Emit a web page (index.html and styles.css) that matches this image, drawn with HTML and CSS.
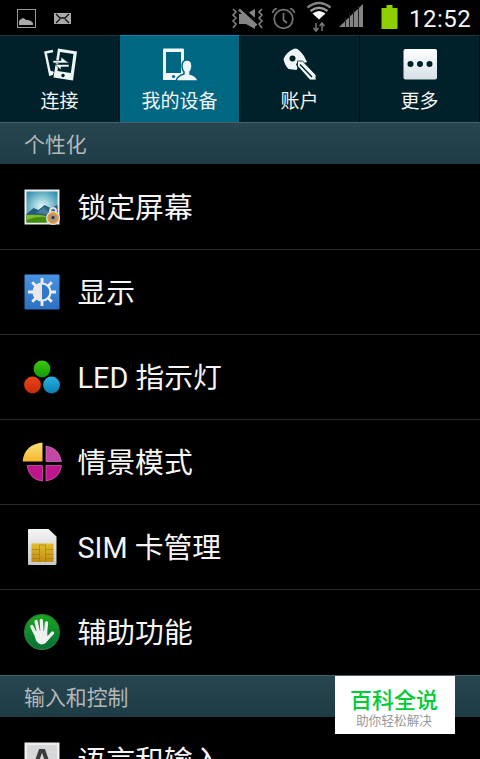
FILE: index.html
```
<!DOCTYPE html>
<html lang="zh-CN">

<head>
  <meta charset="utf-8">
  <title>设置</title>
  <link rel="stylesheet" href="styles.css">
</head>

<body>
  <div class="phone">
    <div class="status-bar">
      <svg class="status-left" width="72" height="20" viewBox="0 0 72 20">
        <rect x="1.500" y="1.500" width="18" height="18" fill="none" stroke="#999" stroke-width="1" />
        <path d="M3 17v-4l2-2 2-1 2 1 1 1 2 0 3 1 2 2v2z" fill="#aaa" />
        <rect x="38" y="5" width="17" height="11" fill="#aaa" />
        <path d="M40 6l4 4h5l4-4M40 15l4-4M53 15l-4-4" fill="none" stroke="#111" stroke-width="1.300" />
      </svg>
      <svg class="status-right" width="170" height="35" viewBox="230 0 170 35">
        <!-- 静音 -->
        <path d="M233 9l3 3-3 3 3 3-3 3 3 3-3 4M262 9l-3 3 3 3-3 3 3 3-3 3 3 4" fill="none" stroke="#808080" stroke-width="1.600" />
        <path d="M239 14h7l9-5v20l-9-5h-7z" fill="#858585" />
        <path d="M240 8l17 15" stroke="#000" stroke-width="5" />
        <path d="M239 9.500l17.500 16" stroke="#858585" stroke-width="2.500" />
        <!-- 闹钟 -->
        <circle cx="283.500" cy="19" r="9.300" fill="none" stroke="#777" stroke-width="1.700" />
        <path d="M283.500 13v7l3.500 3M272.500 13q1-4 4.500-4.500M294.500 13q-1-4-4.500-4.500" fill="none" stroke="#777" stroke-width="1.700" />
        <!-- wifi -->
        <path d="M307.500 7.500q11.500-9 23 0" fill="none" stroke="#858585" stroke-width="2.600" />
        <path d="M310.500 11q8.500-6.500 17 0" fill="none" stroke="#999" stroke-width="2.400" />
        <path d="M312.500 13.500q6.500-5 13 0l-6.500 6z" fill="#fff" />
        <path d="M316 23v7M313.500 28l2.500 3 2.500-3M322 31v-7M319.500 26l2.500-3 2.500 3" fill="none" stroke="#777" stroke-width="1.500" />
        <!-- 信号 -->
        <path d="M339 27l24-23v23z" fill="#858585" />
        <path d="M345.500 18v9M349.500 14v13M353.500 10v17M358.500 6v21" stroke="#222" stroke-width="1" />
        <!-- 电池 -->
        <path d="M381.500 8h5v-3h6v3h5v21h-16z" fill="#8fce00" />
      </svg>
      <span class="clock">12:52</span>
    </div>

    <div class="tabs">
      <div class="tab">
        <svg width="40" height="38" viewBox="40 46 40 38">
          <path d="M53 51l-7.500 1.500 4.500 21.500 3.500-2" fill="none" stroke="#eef5f7" stroke-width="2.400" />
          <path d="M49 70l4 2v3l-4 1z" fill="#eef5f7" />
          <path d="M58 48.500l19 3-4 29-19.500-3z" fill="#eef5f7" />
          <path d="M60 52l13.500 2-2.700 19-13.300-2z" fill="#00212a" />
          <path d="M53 60.500h8v-3.500l8 6H53zM69 64.500H55l6 5.500v-3h8z" fill="#eef5f7" stroke="#00212a" stroke-width=".6" />
          <circle cx="63" cy="75.500" r="1.700" fill="#00212a" />
        </svg>
        <span>连接</span>
      </div>
      <div class="tab active">
        <svg width="40" height="38" viewBox="160 46 40 38">
          <path d="M164 48.500h19q1 0 1 1v30.500h-21v-30.500q0-1 1-1z" fill="#f1f7f9" />
          <path d="M166 52h15v21h-15z" fill="#006783" />
          <circle cx="173.500" cy="76.500" r="1.600" fill="#006783" />
          <path d="M187 60q-5 0-5 6 0 4 2 6v2q-7 2-8 7h22q-1-5-8-7v-2q2-2 2-6 0-6-5-6z" fill="#f1f7f9" stroke="#006783" stroke-width="1.500" />
        </svg>
        <span>我的设备</span>
      </div>
      <div class="tab">
        <svg width="40" height="38" viewBox="280 46 40 38">
          <path d="M283.500 59q3-7 10-10 2-1 4 0 4 3 6.500 7l3 6-3 1-5-2-3 3 1.500 4-1 2-8-1q-4-4-5-10z" fill="#eef5f7" />
          <circle cx="292.500" cy="58.500" r="3" fill="#00212a" />
          <path d="M297.500 61h5l13.500 14v5h-6l-12.500-14z" fill="#eef5f7" stroke="#00212a" stroke-width=".8" />
          <path d="M300 64.500l12 12.500" stroke="#00212a" stroke-width="1.300" />
        </svg>
        <span>账户</span>
      </div>
      <div class="tab">
        <svg width="40" height="38" viewBox="400 46 40 38">
          <defs>
            <linearGradient id="more" x1="0" y1="0" x2="0" y2="1">
              <stop offset="0" stop-color="#fff" />
              <stop offset="1" stop-color="#d5e0e5" />
            </linearGradient>
          </defs>
          <rect x="403.500" y="49" width="33.500" height="30.500" rx="2" fill="url(#more)" />
          <g fill="#00212a">
            <circle cx="410.500" cy="64" r="3" />
            <circle cx="420" cy="64" r="3" />
            <circle cx="429.500" cy="64" r="3" />
          </g>
        </svg>
        <span>更多</span>
      </div>
    </div>

    <h2 class="section">个性化</h2>
    <ul class="list">
      <li class="item">
        <svg class="icon" viewBox="0 0 40 40">
          <defs>
            <radialGradient id="sky" cx=".5" cy=".5" r=".65">
              <stop offset="0" stop-color="#e6fafc" />
              <stop offset="1" stop-color="#2c8eaa" />
            </radialGradient>
          </defs>
          <rect x="2.500" y="2.500" width="35" height="35" fill="#eee" />
          <rect x="4.500" y="4.500" width="31" height="31" fill="url(#sky)" />
          <path d="M4.500 27l7-6 5 2 6-5 6 3 7-3v15h-31z" fill="#265b7a" />
          <path d="M14 26l8-6 4 4 6-3-4 7z" fill="#477d98" />
          <path d="M4.500 28q11-1 20 1v6.500h-20z" fill="#83bd22" />
          <path d="M4.500 33q10-4 20-3v5.500h-20z" fill="#438b13" />
          <path d="M28 26v-2q0-3 3-3t3 3v3" fill="none" stroke="#ddd" stroke-width="2" />
          <circle cx="31" cy="31" r="7" fill="#ddd" />
          <circle cx="31" cy="31" r="4.700" fill="#999" stroke="#f39321" stroke-width="2" />
          <circle cx="31" cy="30.500" r="1.600" fill="#333" />
        </svg>
        <span>锁定屏幕</span>
      </li>
      <li class="item">
        <svg class="icon" viewBox="0 0 40 40">
          <defs>
            <linearGradient id="blue" x1="0" y1="0" x2="0" y2="1">
              <stop offset="0" stop-color="#4994e4" />
              <stop offset="1" stop-color="#2c70c2" />
            </linearGradient>
          </defs>
          <rect x="2.500" y="2.500" width="35" height="35" rx="1" fill="url(#blue)" />
          <path d="M20 6v28M6 20h28M10.200 10.200l19.600 19.600M10.200 29.800l19.600-19.600" stroke="#eee" stroke-width="2.800" />
          <circle cx="20" cy="20" r="8.500" fill="#2f78ca" stroke="#eee" stroke-width="2.200" />
          <path d="M20 11a9 9 0 0 0 0 18z" fill="#e8e8e8" />
        </svg>
        <span>显示</span>
      </li>
      <li class="item">
        <svg class="icon" viewBox="0 0 40 40">
          <defs>
            <linearGradient id="green" x1="0" y1="0" x2="0" y2="1">
              <stop offset="0" stop-color="#3cc80d" />
              <stop offset="1" stop-color="#149b05" />
            </linearGradient>
            <linearGradient id="red" x1="0" y1="0" x2="0" y2="1">
              <stop offset="0" stop-color="#e84418" />
              <stop offset="1" stop-color="#c92a07" />
            </linearGradient>
            <linearGradient id="cyan" x1="0" y1="0" x2="0" y2="1">
              <stop offset="0" stop-color="#2ab4df" />
              <stop offset="1" stop-color="#077eb5" />
            </linearGradient>
          </defs>
          <circle cx="20" cy="12" r="8.400" fill="url(#green)" />
          <circle cx="10.500" cy="28" r="8.400" fill="url(#red)" />
          <circle cx="29.500" cy="28" r="8.400" fill="url(#cyan)" />
        </svg>
        <span>LED 指示灯</span>
      </li>
      <li class="item">
        <svg class="icon" viewBox="0 0 40 40">
          <defs>
            <linearGradient id="yellow" x1="0" y1="0" x2="0" y2="1">
              <stop offset="0" stop-color="#f3e27a" />
              <stop offset="1" stop-color="#fbb62f" />
            </linearGradient>
          </defs>
          <path d="M20.500.500v19h-20q2-17 20-19z" fill="url(#yellow)" />
          <path d="M24 4q13 2 15.500 15.500H24z" fill="#c347a5" stroke="#dc78c5" stroke-width=".7" />
          <path d="M5 23.500h15.500v15.500q-13-1-15.500-15.500z" fill="#bd168c" stroke="#dc62bb" stroke-width=".7" />
          <path d="M24 23.500h15.500q-2 13.500-15.500 15.500z" fill="#bd168c" stroke="#dc62bb" stroke-width=".7" />
        </svg>
        <span>情景模式</span>
      </li>
      <li class="item">
        <svg class="icon" viewBox="0 0 40 40">
          <defs>
            <linearGradient id="card" x1="0" y1="0" x2="0" y2="1">
              <stop offset="0" stop-color="#f5f5f5" />
              <stop offset="1" stop-color="#c8c8c8" />
            </linearGradient>
            <linearGradient id="chip" x1="0" y1="0" x2="0" y2="1">
              <stop offset="0" stop-color="#e3bd2b" />
              <stop offset="1" stop-color="#c28b13" />
            </linearGradient>
          </defs>
          <path d="M7 2h19.500l8 7.500v27q0 1.500-1.500 1.500h-26q-1 0-1-1.500v-33.500q0-1 1-1z" fill="url(#card)" />
          <path d="M9.500 16.500h22v18.500h-22z" fill="url(#chip)" />
          <path d="M17.500 18v17M23.500 18v17M9.500 22.500h8M9.500 27.500h8M9.500 31.500h8M23.500 22.500h8M23.500 27.500h8M23.500 31.500h8M17.500 18h6" fill="none" stroke="#9b7a1b" stroke-width=".6" />
        </svg>
        <span>SIM 卡管理</span>
      </li>
      <li class="item">
        <svg class="icon" viewBox="0 0 40 40">
          <defs>
            <linearGradient id="hand" x1="0" y1="0" x2="0" y2="1">
              <stop offset="0" stop-color="#1aa51c" />
              <stop offset="1" stop-color="#04703a" />
            </linearGradient>
          </defs>
          <circle cx="20" cy="20" r="17.300" fill="url(#hand)" stroke="#287f3c" stroke-width="1.200" />
          <path d="M13.500 22L9.800 14.500M16.500 20L14 9.500M20 20L19.300 8.500M23.500 21L24.500 11M25 27l5.500-6" fill="none" stroke="#f0f0f0" stroke-width="3.300" stroke-linecap="round" />
          <path d="M12 19h13l.5 5 2 .5q-2.500 8-8.500 8-6-1-7-13.500z" fill="#f0f0f0" />
        </svg>
        <span>辅助功能</span>
      </li>
    </ul>

    <h2 class="section">输入和控制</h2>
    <ul class="list">
      <li class="item">
        <svg class="icon" viewBox="0 0 40 40">
          <rect x="2.500" y="2.500" width="35" height="35" fill="#eee" />
          <rect x="5" y="5" width="30" height="30" fill="#d5d7d9" />
          <path d="M11.500 31l7-20h3l7 20M14.500 24h11" fill="none" stroke="#3c3c3c" stroke-width="4" />
        </svg>
        <span>语言和输入</span>
      </li>
    </ul>

    <div class="badge">
      <strong>百科全说</strong>
      <span>助你轻松解决</span>
    </div>
  </div>
</body>

</html>
```

FILE: styles.css
```
* {
  box-sizing: border-box;
}

body {
  margin: 0;
  background-color: #000;
  color: #f5f5f5;
  font-family: Roboto, "Noto Sans CJK SC", sans-serif;
}

.phone {
  position: relative;
  width: 480px;
  height: 759px;
  overflow: hidden;
}

.status-bar {
  display: flex;
  align-items: center;
  height: 35px;
  padding: 0 9px 0 16px;
}

.status-right {
  margin-left: auto;
  margin-right: 9px;
}

.clock {
  width: 62px;
  font-size: 24px;
  line-height: 35px;
  padding-top: 3px;
  letter-spacing: 0.5px;
  white-space: nowrap;
}

.tabs {
  display: grid;
  grid-template-columns: repeat(4, 1fr);
  height: 87px;
}

.tab {
  display: flex;
  flex-direction: column;
  align-items: center;
  padding-top: 10px;
  background-color: #00212a;
  border-top: 1px solid #1b353d;
  border-right: 1px solid #000c12;
  font-size: 19px;
  line-height: 35px;
}

.tab.active {
  background-color: #006783;
  border-top-color: #0888b0;
}

.section {
  height: 42px;
  margin: 0;
  padding-left: 24px;
  background: linear-gradient(#27464f, #1e3c45);
  border-top: 1px solid #45616a;
  color: #b4b8ba;
  font-size: 20.900px;
  font-weight: normal;
  line-height: 45px;
}

.list {
  list-style: none;
  margin: 0;
  padding: 0 0 1px;
}

.item {
  display: flex;
  align-items: center;
  gap: 15.500px;
  height: 85px;
  padding-left: 22px;
  font-size: 28.800px;
  line-height: 40px;
}

.item span {
  padding-top: 2px;
}

.item + .item {
  border-top: 1px solid #292929;
}

.icon {
  width: 40px;
  height: 40px;
}

/* 右下角标签 */
.badge {
  position: absolute;
  left: 335px;
  top: 676px;
  width: 120px;
  height: 58px;
  padding: 10px 2px 0 0;
  background-color: #fff;
  text-align: center;
}

.badge strong {
  display: block;
  color: #00cc33;
  font-size: 22px;
  font-weight: 500;
  line-height: 29px;
}

.badge span {
  display: block;
  color: #999;
  font-size: 12.700px;
  line-height: 12px;
}
```
